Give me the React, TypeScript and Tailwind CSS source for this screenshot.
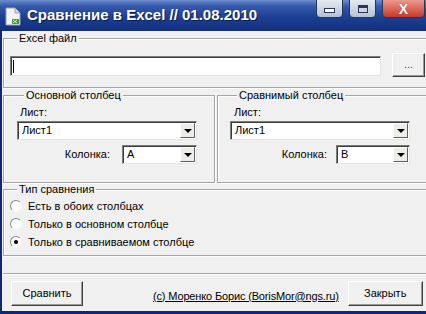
import type { ReactNode } from "react";

function Group({ title, className, children }: { title: string; className?: string; children: ReactNode }) {
    return (
        <fieldset className={"border border-[#a5a5a5] shadow-[inset_1px_1px_0_#fff,1px_1px_0_#fff] " + (className ?? "")}>
            <legend className="ml-[7px] px-[2px] bg-[#f0f0f0] leading-[13px]">{title}</legend>
            {children}
        </fieldset>
    );
}

function Combo({ value, className }: { value: string; className: string }) {
    return (
        <div className={"h-[19px] flex items-center bg-white border border-t-[#7c7c7c] border-l-[#7c7c7c] border-b-[#e4e4e4] border-r-[#e4e4e4] shadow-[inset_1px_1px_0_#3c3c3c] " + className}>
            <span className="pl-[4px] flex-1 leading-[13px]">{value}</span>
            <div className="w-[15px] h-[15px] mr-[1px] flex items-center justify-center bg-[#ecece8] border border-t-[#fff] border-l-[#fff] border-b-[#5f5f5f] border-r-[#5f5f5f]">
                <span className="w-0 h-0 border-l-[4px] border-r-[4px] border-t-[4px] border-l-transparent border-r-transparent border-t-black" />
            </div>
        </div>
    );
}

function Radio({ label, checked }: { label: string; checked?: boolean }) {
    return (
        <div className="h-[18px] flex items-center gap-[6px]">
            <span className="w-[12px] h-[12px] rounded-full bg-white border border-t-[#8a8a8a] border-l-[#8a8a8a] border-b-[#f4f4f4] border-r-[#f4f4f4] flex items-center justify-center">
                {checked && <span className="w-[4px] h-[4px] rounded-full bg-black" />}
            </span>
            <span className="leading-[13px]">{label}</span>
        </div>
    );
}

function Btn({ children, className }: { children: ReactNode; className: string }) {
    return (
        <div className={"h-[25px] flex items-center justify-center bg-[#f0f0f0] border border-t-white border-l-white border-b-[#404040] border-r-[#404040] shadow-[inset_-1px_-1px_0_#9a9a9a] " + className}>
            {children}
        </div>
    );
}

function CaptionBtn({ children, className }: { children: ReactNode; className: string }) {
    return (
        <div className={"h-[19px] -mt-[1px] flex items-center justify-center rounded-b-[4px] border border-[#26375d] " + className}>
            {children}
        </div>
    );
}

export default function App() {
    return (
        <div className="w-[426px] h-[314px] overflow-hidden bg-[#0e2a6e] font-['Liberation_Sans',Arial,sans-serif] text-[11px] text-black">
            {/* title bar */}
            <div className="h-[31px] flex items-center bg-[linear-gradient(to_bottom,#6d8dcd_0%,#3559ad_20%,#1d3f94_55%,#112f7c_100%)]">
                <svg width="16" height="19" viewBox="0 0 16 19" className="ml-[5px] mt-[1px]">
                    <path d="M1 1h9l5 5v12H1z" fill="#f2f4f2" stroke="#9aa3a0" strokeWidth="1" />
                    <path d="M10 1v5h5" fill="#d8ddd8" stroke="#9aa3a0" strokeWidth="1" />
                    <path d="M7 12h7v5H7z" fill="#3c9a3a" />
                    <path d="M8 13l4 3M12 13l-4 3" stroke="#d8f0d0" strokeWidth="1" />
                </svg>
                <span className="ml-[6px] text-white font-bold text-[15px] [text-shadow:1px_1px_0_#0a1c4a]">
                    Сравнение в Excel // 01.08.2010
                </span>
                <div className="ml-auto self-start flex gap-[6px] mr-[1px]">
                    <CaptionBtn className="w-[27px] bg-[linear-gradient(to_bottom,#e6ebf2,#b4c0d2)]">
                        <span className="w-[11px] h-[5px] mt-[4px] bg-white border border-[#2b3654]" />
                    </CaptionBtn>
                    <CaptionBtn className="w-[27px] bg-[linear-gradient(to_bottom,#e6ebf2,#b4c0d2)]">
                        <span className="w-[10px] h-[8px] border border-[#2b3654] bg-[#c9d3e2] shadow-[inset_0_2px_0_#2b3654]" />
                    </CaptionBtn>
                    <CaptionBtn className="w-[43px] bg-[linear-gradient(to_bottom,#ec9a8c,#c8392b)]">
                        <span className="text-white font-bold text-[14px] leading-[14px] [text-shadow:0_0_1px_#6a1a10]">X</span>
                    </CaptionBtn>
                </div>
            </div>

            {/* body */}
            <div className="ml-[2px] w-[440px] h-[280px] bg-[#f0f0f0] pl-[1px] pt-[1px]">
                <Group title="Excel файл" className="w-[432px] pl-[6px] pt-[8px] pb-[10px]">
                    <div className="flex items-start">
                        <div className="w-[371px] h-[20px] mt-[3px] flex items-center bg-white border border-t-[#7c7c7c] border-l-[#7c7c7c] border-b-[#e4e4e4] border-r-[#e4e4e4] shadow-[inset_1px_1px_0_#3c3c3c]">
                            <span className="ml-[2px] w-[1px] h-[13px] bg-black" />
                        </div>
                        <Btn className="ml-[11px] w-[33px] !h-[24px]">
                            <span className="text-[#555] -mt-[2px]">...</span>
                        </Btn>
                    </div>
                </Group>

                <div className="mt-[1px] flex gap-[2px]">
                    <Group title="Основной столбец" className="w-[212px] pl-[13px] pb-[18px]">
                        <div className="mt-[4px] pl-[3px] leading-[13px]">Лист:</div>
                        <Combo value="Лист1" className="mt-[2px] w-[180px]" />
                        <div className="mt-[5px] w-[180px] flex items-center justify-end gap-[12px]">
                            <span className="leading-[13px]">Колонка:</span>
                            <Combo value="A" className="w-[75px]" />
                        </div>
                    </Group>
                    <Group title="Сравнимый столбец" className="w-[222px] pl-[12px] pb-[18px]">
                        <div className="mt-[4px] pl-[4px] leading-[13px]">Лист:</div>
                        <Combo value="Лист1" className="mt-[2px] w-[180px]" />
                        <div className="mt-[5px] w-[180px] flex items-center justify-end gap-[9px]">
                            <span className="leading-[13px]">Колонка:</span>
                            <Combo value="B" className="w-[74px]" />
                        </div>
                    </Group>
                </div>

                <Group title="Тип сравнения" className="w-[432px] pl-[6px] pt-[1px] pb-[4px]">
                    <Radio label="Есть в обоих столбцах" />
                    <Radio label="Только в основном столбце" />
                    <Radio label="Только в сравниваемом столбце" checked />
                </Group>

                <div className="mt-[17px] w-[432px] border-t border-[#a5a5a5] shadow-[0_1px_0_#fff]" />

                <div className="mt-[7px] pl-[8px] flex items-center">
                    <Btn className="w-[72px]">Сравнить</Btn>
                    <span className="ml-[70px] mt-[5px] underline leading-[13px] tracking-[-0.15px]">(c) Моренко Борис (BorisMor@ngs.ru)</span>
                    <Btn className="ml-[9px] w-[75px]">Закрыть</Btn>
                </div>
            </div>
        </div>
    );
}
